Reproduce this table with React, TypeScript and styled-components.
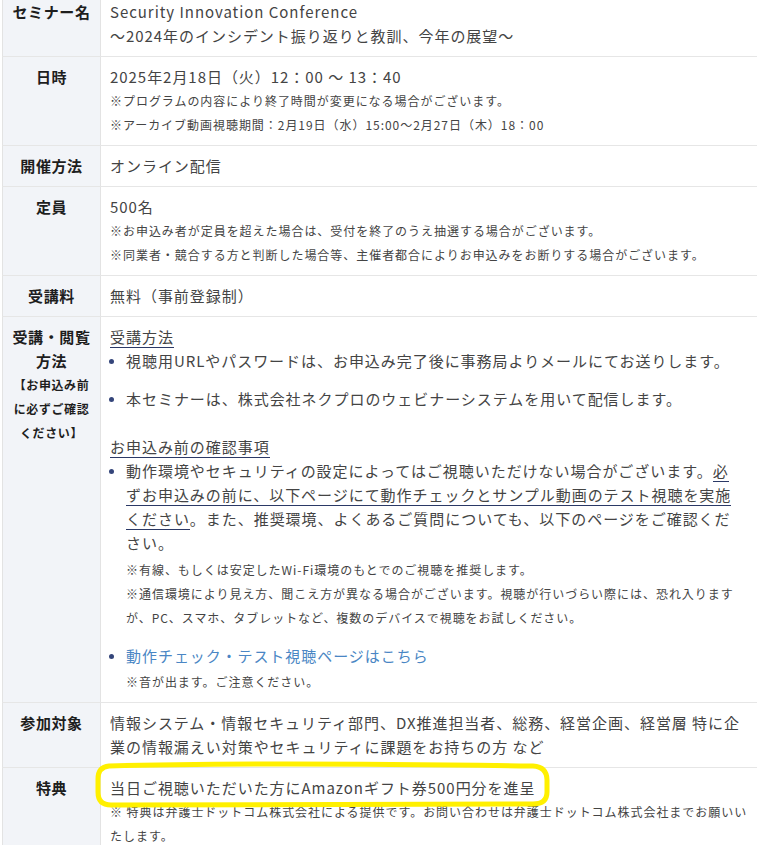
import React from "react";
import styled, { createGlobalStyle } from "styled-components";

const Global = createGlobalStyle`
  html, body { margin: 0; padding: 0; background: #ffffff; }
  body {
    font-family: "Noto Sans CJK JP", "Noto Sans", sans-serif;
    color: #444444;
    overflow: hidden;
  }
`;

const Page = styled.div`
  width: 757px;
  height: 845px;
  overflow: hidden;
  padding-left: 2px;
  box-sizing: border-box;
`;

const Table = styled.table`
  margin-top: -8px;
  width: 755px;
  border-collapse: separate;
  border-spacing: 0;
  table-layout: fixed;
  letter-spacing: 0.06em;
`;

const Th = styled.th`
  width: 97px;
  padding: 8px 0;
  background: #f2f4f8;
  border-left: 1px solid #e3e3e3;
  border-right: 1px solid #e3e3e3;
  border-bottom: 1px solid #e6e6e6;
  color: #1e1e1e;
  font-size: 15px;
  line-height: 24px;
  font-weight: 700;
  letter-spacing: 0.04em;
  text-align: center;
  vertical-align: top;
`;

const ThSmall = styled.span`
  display: block;
  font-size: 12px;
  line-height: 24px;
`;

const Td = styled.td<{ $relative?: boolean }>`
  position: ${(p) => (p.$relative ? "relative" : "static")};
  padding: 8px 4px 8px 9px;
  border-bottom: 1px solid #e6e6e6;
  font-size: 15px;
  line-height: 24px;
  color: #444444;
  vertical-align: top;
  text-align: left;
  white-space: nowrap;
`;

const Line = styled.div``;

const Note = styled.div<{ $top?: number }>`
  font-size: 12px;
  line-height: 24px;
  color: #444444;
  margin-top: ${(p) => p.$top ?? 0}px;
`;

const Heading = styled.div<{ $top?: number }>`
  margin-top: ${(p) => p.$top ?? 0}px;
  & > span {
    border-bottom: 1px solid #2b3966;
  }
`;

const List = styled.ul`
  margin: 0;
  padding: 0 0 0 16px;
`;

const Item = styled.li<{ $last?: boolean }>`
  margin-bottom: ${(p) => (p.$last ? 0 : 14)}px;
  &::marker {
    color: #34457a;
    font-size: 13px;
  }
`;

const Emph = styled.span`
  border-bottom: 1px solid #2b3966;
`;

const LinkText = styled.span`
  color: #4a86c4;
`;

const Highlight = styled.svg`
  position: absolute;
  left: -6px;
  top: -6px;
  width: 458px;
  height: 48px;
  overflow: visible;
  pointer-events: none;
`;

export default function App() {
  return (
    <>
      <Global />
      <Page>
        <Table>
          <tbody>
            <tr>
              <Th>セミナー名</Th>
              <Td>
                <Line>Security Innovation Conference</Line>
                <Line>～2024年のインシデント振り返りと教訓、今年の展望～</Line>
              </Td>
            </tr>
            <tr>
              <Th>日時</Th>
              <Td>
                <Line>2025年2月18日（火）12：00 ～ 13：40</Line>
                <Note>※プログラムの内容により終了時間が変更になる場合がございます。</Note>
                <Note>※アーカイブ動画視聴期間：2月19日（水）15:00〜2月27日（木）18：00</Note>
              </Td>
            </tr>
            <tr>
              <Th>開催方法</Th>
              <Td>
                <Line>オンライン配信</Line>
              </Td>
            </tr>
            <tr>
              <Th>定員</Th>
              <Td>
                <Line>500名</Line>
                <Note>※お申込み者が定員を超えた場合は、受付を終了のうえ抽選する場合がございます。</Note>
                <Note>※同業者・競合する方と判断した場合等、主催者都合によりお申込みをお断りする場合がございます。</Note>
              </Td>
            </tr>
            <tr>
              <Th>受講料</Th>
              <Td>
                <Line>無料（事前登録制）</Line>
              </Td>
            </tr>
            <tr>
              <Th>
                受講・閲覧
                <br />
                方法
                <ThSmall>
                  【お申込み前
                  <br />
                  に必ずご確認
                  <br />
                  ください】
                </ThSmall>
              </Th>
              <Td>
                <Heading>
                  <span>受講方法</span>
                </Heading>
                <List>
                  <Item>視聴用URLやパスワードは、お申込み完了後に事務局よりメールにてお送りします。</Item>
                  <Item $last>本セミナーは、株式会社ネクプロのウェビナーシステムを用いて配信します。</Item>
                </List>
                <Heading $top={24}>
                  <span>お申込み前の確認事項</span>
                </Heading>
                <List>
                  <Item>
                    動作環境やセキュリティの設定によってはご視聴いただけない場合がございます。
                    <Emph>
                      必<br />
                      ずお申込みの前に、以下ページにて動作チェックとサンプル動画のテスト視聴を実施
                      <br />
                      ください
                    </Emph>
                    。また、推奨環境、よくあるご質問についても、以下のページをご確認くだ
                    <br />
                    さい。
                    <Note $top={3}>※有線、もしくは安定したWi-Fi環境のもとでのご視聴を推奨します。</Note>
                    <Note>
                      ※通信環境により見え方、聞こえ方が異なる場合がございます。視聴が行いづらい際には、恐れ入ります
                      <br />
                      が、PC、スマホ、タブレットなど、複数のデバイスで視聴をお試しください。
                    </Note>
                  </Item>
                  <Item $last>
                    <LinkText>動作チェック・テスト視聴ページはこちら</LinkText>
                    <Note $top={2}>※音が出ます。ご注意ください。</Note>
                  </Item>
                </List>
              </Td>
            </tr>
            <tr>
              <Th>参加対象</Th>
              <Td>
                <Line>情報システム・情報セキュリティ部門、DX推進担当者、総務、経営企画、経営層 特に企</Line>
                <Line>業の情報漏えい対策やセキュリティに課題をお持ちの方 など</Line>
              </Td>
            </tr>
            <tr>
              <Th>特典</Th>
              <Td $relative>
                <Line>当日ご視聴いただいた方にAmazonギフト券500円分を進呈</Line>
                <Note>
                  ※ 特典は弁護士ドットコム株式会社による提供です。お問い合わせは弁護士ドットコム株式会社までお願いい
                  <br />
                  たします。
                </Note>
                <Highlight viewBox="0 0 458 48">
                  <path
                    d="M 14 4 C 120 1, 300 2, 438 4 Q 452 5 452 18 L 452 30 Q 452 42 438 42 L 16 43 Q 3 43 3 30 L 3 17 Q 3 5 14 4 Z"
                    fill="none"
                    stroke="#fff000"
                    strokeWidth="5"
                    strokeLinejoin="round"
                  />
                </Highlight>
              </Td>
            </tr>
          </tbody>
        </Table>
      </Page>
    </>
  );
}
